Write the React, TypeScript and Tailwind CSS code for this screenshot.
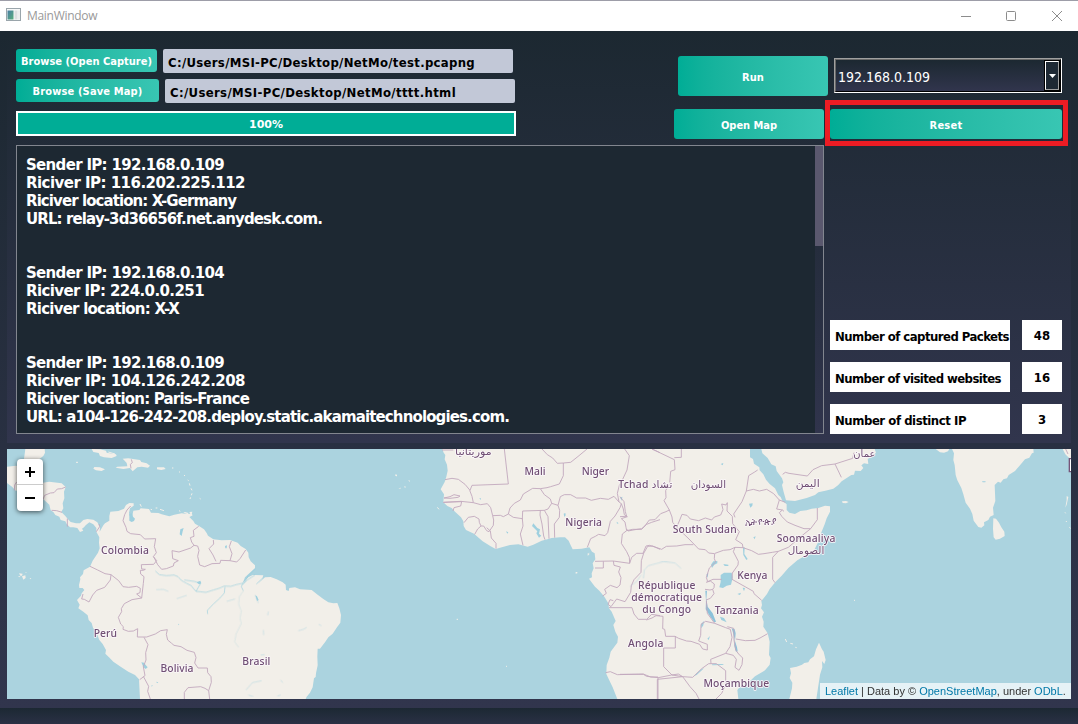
import React from 'react';

const BTN =
  'flex shrink-0 items-center justify-center whitespace-nowrap rounded-[3px] bg-gradient-to-r from-[#00ad96] to-[#38c6b3] text-[11px] font-bold text-white';
const FIELD =
  'flex h-6 w-[350px] items-center whitespace-pre rounded-[2px] bg-[#c2c8d7] pl-[5px] text-[13px] font-bold text-black';

const LOG: [string, number][] = [
  ['Sender IP: 192.168.0.109', 198],
  ['Riciver IP: 116.202.225.112', 219],
  ['Riciver location: X-Germany', 210],
  ['URL: relay-3d36656f.net.anydesk.com.', 296],
  ['', 0],
  ['', 0],
  ['Sender IP: 192.168.0.104', 198],
  ['Riciver IP: 224.0.0.251', 178],
  ['Riciver location: X-X', 153],
  ['', 0],
  ['', 0],
  ['Sender IP: 192.168.0.109', 198],
  ['Riciver IP: 104.126.242.208', 219],
  ['Riciver location: Paris-France', 223],
  ['URL: a104-126-242-208.deploy.static.akamaitechnologies.com.', 483],
];

const STATS = [
  { label: 'Number of captured Packets', value: 48, len: 174 },
  { label: 'Number of visited websites', value: 16, len: 166 },
  { label: 'Number of distinct IP', value: 3, len: 131 },
];

/* Country names: text, centre x, baseline y and drawn length in map units */
const NAMES: [string, number, number, number][] = [
  ['Colombia', 375, 341, 144],
  ['Perú', 316, 590, 70],
  ['Bolivia', 531, 696, 99],
  ['Brasil', 769, 675, 84],
  ['موريتانيا', 1420, 45, 110],
  ['Mali', 1605, 105, 63],
  ['Niger', 1786, 106, 82],
  ['Nigeria', 1751, 259, 110],
  ['Tchad تشاد', 1936, 144, 162],
  ['السودان', 2125, 144, 106],
  ['اليمن', 2423, 141, 72],
  ['عمان', 2593, 50, 66],
  ['South Sudan', 2114, 279, 192],
  ['ኢትዮጵያ', 2282, 255, 94],
  ['Soomaaliya', 2418, 306, 176],
  ['الصومال', 2418, 343, 110],
  ['Kenya', 2257, 416, 90],
  ['République', 2000, 447, 172],
  ['démocratique', 2000, 483, 212],
  ['du Congo', 2000, 519, 146],
  ['Tanzania', 2210, 522, 132],
  ['Angola', 1937, 620, 106],
  ['Moçambique', 2209, 741, 197],
];

function WorldMap() {
  return (
    <svg width="1064" height="250" viewBox="21 27 3192 750" className="block">
      <rect x="21" y="27" width="3192" height="750" fill="#abd3df" />
      <g fill="#f2efe9" strokeLinejoin="round">
        <path d="M76 27L72 57H118L130 48 135 38 134 27Z" />
        <path d="M21 80L48 77 60 80V152L47 152 36 140 21 129Z" />
        <path d="M275 27L300 28 318 32 320 38 348 43 350 48 335 54 312 52 300 48 296 39 280 36Z" />
        <path d="M368 56L385 55 399 57 420 60 424 66 440 70 450 77 444 83 425 80 412 82 398 94 390 84 370 87 347 83 352 80 382 79 380 69 374 62Z" />
        <path d="M283 81L300 82 315 88 305 93 288 91 280 86ZM471 82L492 82 497 87 484 90 471 88Z" />
        <path d="M129 128L148 125 160 127 185 130 197 141 192 155 193 175 188 190 190 205 184 216 196 228 204 238 212 246 228 250 240 250 250 240 262 237 280 239 292 247 300 262 299 275 310 256 315 250 328 242 328 228 331 215 355 213 372 206 378 195 388 189 401 190 401 197 390 205 387 218 389 228 395 234 398 222 400 212 418 210 422 205 447 207 453 218 475 219 485 223 508 229 523 224 545 220 560 222 575 221 578 226 568 231 580 243 585 251 598 259 612 268 620 279 624 287 640 298 665 301 690 300 713 308 722 318 737 327 745 338 746 352 752 364 765 376 765 385 748 400 735 412 728 430 745 412 758 405 790 406 786 418 772 432 795 412 812 411 830 418 848 427 857 434 858 450 866 453 868 444 885 442 900 448 935 450 950 462 970 477 985 487 1000 490 1012 489 1018 505 1023 525 1021 548 1011 562 998 581 985 592 976 605 960 626 953 626 952 650 953 676 948 700 947 711 942 715 938 742 930 758 920 770 917 777H420L417 718 405 705 385 695 362 680 340 665 327 652 316 641 318 630 308 612 298 600 290 580 279 563 275 549 266 540 263 526 250 515 235 505 239 494 231 480 243 467 245 460 253 450 248 444 238 444 237 435 241 418 240 412 249 402 251 391 270 380 278 362 286 350 294 338 299 325 297 308 298 292 289 275 289 264 280 253 268 247 257 256 252 262 246 266 250 272 240 276 232 264 220 262 210 262 200 252 196 244 182 240 178 230 166 225 160 216 152 211 148 194 140 187 129 177Z" />
        <path d="M1327 27L1331 38 1336 45 1334 58 1341 74 1343 92 1339 110 1334 126 1322 148 1332 163 1330 187 1342 198 1355 204 1365 215 1383 232 1390 244 1391 258 1398 270 1422 281 1448 304 1472 319 1487 327 1500 323 1530 315 1555 313 1583 320 1600 314 1625 302 1642 298 1655 294 1680 292 1695 292 1706 302 1712 316 1718 328 1745 326 1768 322 1776 335 1784 340 1786 358 1778 370 1781 385 1775 400 1776 412 1767 416 1777 430 1785 440 1798 452 1813 470 1825 490 1827 505 1835 515 1847 543 1840 555 1846 575 1854 590 1852 608 1843 620 1832 635 1828 653 1820 675 1819 702 1826 717 1838 742 1852 777H2215L2212 750 2220 740 2244 729 2265 709 2295 691 2309 674 2312 654 2307 645 2309 605 2303 580 2290 560 2291 545 2286 530 2292 517 2283 505 2286 495 2284 483 2301 462 2309 447 2327 425 2345 407 2365 384 2392 361 2415 347 2440 335 2455 305 2463 280 2474 253 2480 235 2490 215 2490 199 2475 197 2455 204 2435 206 2420 211 2401 213 2385 222 2368 218 2360 210 2360 193 2347 182 2342 171 2335 165 2325 145 2309 132 2298 119 2290 103 2279 91 2278 82 2262 71 2259 57 2250 52 2250 27Z" />
        <path d="M2284 27L2287 40 2303 54 2314 73 2327 79 2330 93 2346 115 2350 127 2346 135 2351 156 2358 181 2385 183 2420 174 2445 165 2455 157 2476 152 2500 146 2514 136 2525 124 2554 105 2562 104 2565 92 2582 93 2590 84 2584 76 2592 70 2605 72 2603 57 2615 50 2628 38 2624 27Z" />
        <path d="M2807 27L2820 37 2832 38 2844 34 2848 27ZM2856 27L2862 40 2860 60 2864 75 2867 105 2872 121 2884 144 2890 163 2897 188 2910 206 2917 222 2921 242 2935 261 2944 263 2953 256 2952 247 2965 240 2970 230 2981 225 2979 203 2986 183 2984 135 2994 125 3002 128 3010 118 3021 115 3026 105 3045 93 3058 78 3075 58 3088 53 3096 40 3101 38 3100 27Z" />
        <path d="M2980 235L2988 236 2997 248 3004 262 3013 275 3014 288 3000 296 2987 299 2981 292 2979 267ZM3188 27L3196 43 3202 49 3213 58V27ZM3200 168L3205 171 3200 194 3196 203 3200 180Z" />
        <path d="M2457 608L2466 628 2471 635 2477 660 2473 672 2466 663 2467 682 2460 704 2449 777H2368L2376 745 2377 728 2369 714 2373 700 2370 684 2390 680 2406 674 2413 669 2425 667 2430 658 2442 649 2448 628Z" />
        <path d="M2526 184L2538 183 2546 186 2538 190 2528 189ZM57 400L68 401 66 407 61 407ZM66 409L76 406 77 414 70 419ZM55 408L62 409 57 412ZM76 397L80 397 78 400ZM89 414L94 415 91 418ZM1186 103L1191 104 1191 109 1186 108ZM1225 120L1230 122 1228 126ZM1212 139L1218 140 1215 144ZM1195 145L1203 143 1201 146ZM1727 396L1732 396 1732 400 1727 401ZM550 218L555 216 566 219 563 223ZM568 216L577 215 574 227 567 230 571 222Z" />
        <path d="M1762 340L1769 338 1768 345 1762 348Z" stroke="#abd3df" strokeWidth="2" />
      </g>
      <g fill="none" stroke="#f2efe9" strokeWidth="3">
        <path d="M537 95L540 97M552 106L555 107M563 120L566 122M568 130L570 137M573 145L576 151M576 160L574 166M572 172L570 177M599 175L602 177M516 84L520 84M420 192L424 200M452 208L456 209M467 204L472 204M480 208L492 212M537 212L541 214M1312 202L1317 208M1370 538H1374M1518 679H1521M2356 597L2360 606M2371 610L2379 612M2386 622L2390 623M2562 481H2565M3195 217L3197 220M3198 243L3200 246M3208 262L3212 265M228 67L234 67M325 36L345 42" />
      </g>

      <g fill="none" stroke="#8ecbdd" strokeWidth="2" strokeLinejoin="round" opacity=".85">
        <path d="M765 386L754 398 744 408 735 424 726 430 708 434 692 439 673 438 657 445 640 450 618 457 600 455 588 454 580 445 574 437 560 430 544 421 534 410 522 405 500 407 478 404 466 393" />
        <path d="M588 454L602 430 582 424 553 420M675 440L673 459 659 475 640 492 622 511 623 522M728 430L724 440 730 452M769 432L786 416M728 434L742 420 765 405" strokeWidth="2" />
        <path d="M730 452L718 470 716 493 724 513 720 535 724 550 708 582 704 606 716 622" strokeWidth="1.5" opacity=".5" />
        <path d="M468 449L490 448 505 454M530 476L560 466M680 484L705 477M765 465L771 478 775 489M738 750L757 728 785 722M745 765L760 770M895 572L910 568 920 562M956 553L964 557M782 645L794 644M790 570L791 585M805 515L803 526M842 720L848 728M832 768L842 765M1930 415L1933 390 1945 377 1990 365 2025 369 2043 385M1890 440L1910 424 1923 405" strokeWidth="2" opacity=".6" />
      </g>
      <g fill="#9fd0df">
        <path d="M388 222L396 220 399 230 405 236 402 243 395 246 388 242ZM541 268L551 264 548 274 545 288 539 283ZM590 427L601 422 604 430 597 433ZM675 318L681 316 680 325 676 325ZM766 466L771 469 776 480 771 483ZM424 667L432 668 437 675 443 682 437 687 430 681ZM535 551L538 553 535 556ZM469 725L475 727 471 730ZM455 735L458 736 455 741Z" />
        <path d="M2162 405L2172 398 2195 398 2198 413 2193 434 2180 437 2169 444 2158 442 2162 426ZM2133 374L2140 364 2152 363 2152 370 2143 374 2136 384ZM2170 372L2185 374 2185 378 2174 378ZM2229 323L2234 322 2233 342 2243 357 2239 360 2230 345ZM2247 191L2258 190 2257 197 2251 203ZM2260 292L2267 289 2264 298ZM2160 530L2172 534 2180 547 2164 540ZM2212 462L2223 458 2220 465ZM2228 443L2235 444 2232 454ZM2103 552L2112 543 2110 556 2104 565ZM2122 596L2130 588 2126 600ZM2136 673L2172 672 2167 675 2137 676ZM2082 708L2105 687 2112 685 2090 705ZM1600 250L1612 264 1620 268 1617 281 1624 287 1617 293 1609 280 1612 274 1596 258ZM1691 221L1696 219 1697 226 1693 231ZM1518 274L1525 277 1522 281ZM1438 175L1443 175 1442 180ZM1494 293L1498 290M1860 173L1867 170 1866 182ZM1850 245L1856 250 1851 251ZM2162 72L2170 69 2168 76ZM2946 124L2957 124 2956 127 2948 127Z" />
        <path d="M2116 452L2121 452 2119 476 2123 500 2138 520 2148 545 2143 547 2130 529 2117 508 2118 482ZM2195 565L2204 568 2207 580 2205 603 2211 622 2213 634 2208 635 2203 617 2204 597 2199 578ZM2120 403L2125 400 2122 414Z" fill="#8cc2da" />
      </g>

      <g fill="none" stroke="#c2a8bd" strokeWidth="2.7" strokeLinejoin="round">
        <path d="M129 178L134 166 151 159 162 158 172 147 185 146 197 141M155 211L170 212 186 217M202 236V260M297 252L299 260 289 275M50 126L44 135 43 151M394 58L397 68 391 73 393 85" />
        <path d="M392 198L381 210 374 224 369 242 378 262 381 274 392 281 421 284 434 297 467 296 463 320 469 338 460 350 470 362 461 373 424 374 425 387 436 388 430 391 421 391 422 402 432 410 430 430 425 474 410 462 420 458 421 445 410 439 386 442 369 440 356 422 333 404 315 401 293 390 270 379" />
        <path d="M333 404L331 420 314 442 290 451 278 465 267 486 253 478 245 477 249 462M425 474L396 479 373 491 364 506 365 515 355 532 362 552 370 560 369 568 385 574 400 573 413 566 412 591 440 591 466 582 482 572 502 569 499 583 503 600 515 610 522 616 543 620 561 631 583 637 588 653 584 669 594 684 622 684 623 698 633 710 634 727 626 752 615 745 602 740 564 743 553 757V777M626 752L629 777M432 592L444 614 437 638 438 660 430 680 435 707 419 719M430 709L446 739 443 754 451 777" />
        <path d="M461 350L473 374 485 388 499 386 520 378 522 369 535 362 518 356 516 332 537 336 572 324 582 316 575 306 571 293 582 289 580 271 596 259M582 316L593 318 597 331 593 349 599 375 614 380 636 371 660 370 662 361 690 362 710 366 720 356 737 330M640 300L641 312 627 326 639 345 648 364M694 303L688 320 696 341 690 362" />
      </g>

      <g transform="translate(1290 0)" fill="none" stroke="#c2a8bd" strokeWidth="2.7" strokeLinejoin="round">
        <path d="M36 30H70M223 27L235 132 126 136 120 151 105 133 85 118 66 115 45 119M39 187L93 184 130 188 126 169 119 151M130 188L152 194 172 191 182 203 188 227 191 240 190 256 177 275 170 272 161 258 153 258 148 247 147 237 133 229 115 232 102 248M42 174L60 170 72 164 90 168 84 172 60 175 42 174M42 187L95 185 92 198 72 203 69 213M153 258L143 267 134 283M170 263L181 273 184 294 198 310 198 326" />
        <path d="M188 227L211 226 220 230 235 222 250 232 277 236 279 258 271 282 279 316M235 222L240 204 253 190 271 180 280 162 308 145 331 146 351 143 362 140 388 132 400 107V69L382 70 368 54 352 44 336 27M400 69L422 67 447 47 471 27M331 146L343 164 361 177 365 190 354 207 343 211 278 213 277 238M331 211L330 225 336 252 341 288 345 299M343 211L354 230 357 296M365 190L384 196 389 211 388 232 373 252 374 293M384 196L391 170 403 164 422 164 440 174 467 174 484 181 511 175 535 178 552 169 567 186 562 160 568 136 577 120 591 90 598 47 584 27M666 27L690 38" />
        <path d="M567 186L574 191 570 203 555 228 541 244 533 278 525 287 506 283 496 289 482 296 472 322M574 191L580 207 583 224 592 230 574 236 585 246 588 262 590 272 577 282 574 310 590 335 598 352 599 370 550 363 495 364M590 272L608 268 635 268 650 253 665 247 690 239M599 370L605 352 620 340 641 340 653 319 668 318 690 328M641 340L634 362 633 397 612 419 604 437 602 457 585 485 560 477 543 500 534 493 540 479 550 482M520 364V384H495M550 363L552 376 571 381 566 396 573 413 570 435 561 443 541 436 524 448 529 460 518 468M537 503L606 503 612 522 625 538 650 538 665 523 690 527M527 698L541 695 562 704 640 702 662 711 684 711V777" />
      </g>

      <g transform="translate(1860 0)" fill="none" stroke="#c2a8bd" strokeWidth="2.7" strokeLinejoin="round">
        <path d="M96 27L163 59 165 89 152 94 149 130 137 152 138 173 132 182 148 210 138 215 122 221 105 239 88 240 75 257 65 266 45 269 24 273 20 267M163 53L184 52V27M0 170L12 185 16 215 20 229 0 230M148 210L156 231 158 247 170 261 178 243 186 223 201 226 211 237 236 242 256 234 275 240 283 231 302 225 309 209 305 192 318 195 322 188 321 213 337 229 338 251 358 275 347 299 367 312 369 323 345 322 330 329 310 331 285 340" />
        <path d="M170 261L186 277 207 297 236 327 256 329 266 339 284 341 283 356 287 366 268 384 259 412 263 425 279 418H305M69 340L78 318 88 316 105 321 125 328 139 319 170 318 195 314 220 314M345 322L340 335 355 364 354 375 337 399 336 418 400 454 402 461 425 481M369 323L395 332 415 343 432 341 457 337 475 334 458 352V418L465 428M475 334L505 322 552 282 572 266 552 266 525 256 502 246 486 230 478 218 487 210 470 207 478 180 461 161 440 148 418 153 400 148 379 153 366 185 341 222 345 232M379 153L386 107 404 96 413 90M478 180L496 187M572 266L592 239V204M487 210L492 214" />
        <path d="M258 427L271 423 283 432 282 443 278 448 282 461 271 475 258 480M255 448L270 450 278 448M259 482L262 520 284 550 257 544 243 553 242 586 236 603 262 613V630L248 627 239 613 213 604 200 603 176 595 165 589H137L134 568 128 566 129 529 108 527 96 534 79 540M166 589V624H131V680L156 705 188 710 218 712 245 686 266 671 289 671 317 692V735L305 760 288 777M0 703H70L80 709 115 713 155 705 175 702 188 710 210 740 228 760 237 777M188 710L112 718V777M284 550L317 563 331 568 336 592 330 620 317 640 272 658 273 671M322 560L341 565 342 600 347 630 356 642 368 654 366 674 357 691 345 682 349 658 340 646 317 640M348 597L376 602 405 601 420 594 443 581" />
        <path d="M488 103L496 97 507 100 562 108 579 89 605 77 645 72 698 55 702 38M645 72L664 112" />
        <path d="M1337 27L1344 42" />
      </g>

      <g
        fill="#704f74"
        stroke="#fbf7fa"
        strokeWidth="5"
        strokeLinejoin="round"
        paintOrder="stroke"
        fontFamily="'Noto Sans','DejaVu Sans',sans-serif"
        fontSize="31"
        fontWeight="500"
        textAnchor="middle"
      >
        {NAMES.map(([t, x, y, len]) => (
          <text key={t} x={x} y={y} textLength={len} lengthAdjust={/^[A-Z d]/.test(t) ? 'spacing' : 'spacingAndGlyphs'}>
            {t}
          </text>
        ))}
      </g>
      <path d="M3213 56H3208V95H3213" fill="#fff" stroke="#765579" strokeWidth="4" />
    </svg>
  );
}

function Title() {
  return (
    <header className="flex h-[31px] shrink-0 items-center border-t border-[#9d9da8] bg-white text-[#999]">
      <svg width="16" height="14" viewBox="0 0 16 14" className="-mt-[2px] ml-[6px] shrink-0">
        <rect x=".5" y=".5" width="14" height="12" fill="#f7f8f8" stroke="#9aa5ab" />
        <rect x="1.5" y="2.5" width="6" height="9" fill="url(#app)" />
        <rect x="8.5" y="2.5" width="3" height="9" fill="#dcdfe0" />
        <rect x="12" y="2.5" width="2" height="9" fill="#eceeee" />
        <defs>
          <linearGradient id="app" x1="0" y1="0" x2="1" y2="1">
            <stop stopColor="#4a7fa5" />
            <stop offset="1" stopColor="#58ad7b" />
          </linearGradient>
        </defs>
      </svg>
      <span className="ml-[5px] font-['Open_Sans',sans-serif] text-[12px] leading-none tracking-[-0.3px]">MainWindow</span>
      <svg width="110" height="12" viewBox="0 0 110 12" className="ml-auto mr-[13px] -mt-px shrink-0" fill="none" stroke="#8c8c8c">
        <path d="M6 6.5H16" />
        <rect x="51.5" y="1.5" width="9" height="9" rx="1" />
        <path d="M97 1L107 11M107 1L97 11" />
      </svg>
    </header>
  );
}

/* One line of text spread to a fixed advance width through letter spacing */
function Fit({ text, len, size, regular, wide }: { text: string; len: number; size: number; regular?: boolean; wide?: boolean }) {
  const [gap, setGap] = React.useState(0);
  React.useLayoutEffect(() => {
    const ctx = document.createElement('canvas').getContext('2d');
    if (!ctx) return;
    const family = wide ? '"DejaVu Sans"' : '"DejaVu Sans Condensed"';
    ctx.font = `${regular ? 400 : 700} ${size}px ${family}, sans-serif`;
    setGap((len - ctx.measureText(text).width) / text.length);
  }, [text, len, size, regular, wide]);
  return (
    <span
      className={`whitespace-pre pt-[2px] leading-none ${wide ? "font-['DejaVu_Sans',sans-serif]" : ''}`}
      style={{ letterSpacing: `${gap}px` }}
    >
      {text}
    </span>
  );
}

export default function App() {
  return (
    <div className="relative flex h-[724px] w-[1078px] flex-col overflow-hidden bg-[#1c2833] font-['DejaVu_Sans_Condensed','DejaVu_Sans',sans-serif]">
      <Title />
      <div className="flex h-[677px] shrink-0 flex-col bg-gradient-to-b from-[#1c2831] to-[#31354d] px-[7px]">
        <main className="h-[412px] shrink-0 bg-gradient-to-b from-[#1c2831] to-[#31354d] px-[9px]">
          <div className="flex h-[114px] justify-between">
            <div className="flex w-[500px] flex-col pt-[18px]">
              <div className="flex h-[30px] gap-[6px]">
                <button className={`${BTN} h-[23px] w-[141px]`}>
                  <Fit text="Browse (Open Capture)" len={131} size={11} />
                </button>
                <div className={FIELD}>
                  <Fit text="C:/Users/MSI-PC/Desktop/NetMo/test.pcapng" len={307} size={13} />
                </div>
              </div>
              <div className="flex h-8 gap-[6px]">
                <button className={`${BTN} h-[23px] w-[143px]`}>
                  <Fit text="Browse (Save Map)" len={110} size={11} />
                </button>
                <div className={FIELD}>
                  <Fit text="C:/Users/MSI-PC/Desktop/NetMo/tttt.html" len={286} size={13} />
                </div>
              </div>
              <div className="flex h-[25px] items-center justify-center border-2 border-white bg-[#00ad96] text-[11px] font-bold text-white">
                <Fit text="100%" len={34} size={11} wide />
              </div>
            </div>
            <div className="flex w-[388px] flex-col pt-[25px]">
              <div className="flex h-[53px] gap-[6px] pl-1">
                <button className={`${BTN} h-10 w-[150px]`}>
                  <Fit text="Run" len={22} size={11} />
                </button>
                <div className="mt-[2px] flex h-[35px] w-[228px] border border-b-white border-l-[#a0a0a0] border-r-white border-t-[#a0a0a0]">
                  <div className="flex w-full items-center border border-b-black border-l-[#696969] border-r-black border-t-[#696969] bg-gradient-to-b from-[#1c2831] to-[#31354d] pl-[2px] text-[14px] text-white">
                    <Fit text="192.168.0.109" len={92} size={14} regular />
                    <div className="ml-auto flex h-[31px] w-4 items-center justify-center border border-black bg-[#1e2934]">
                      <div className="flex h-[29px] w-[14px] items-center justify-center border border-b-[#a0a0a0] border-l-white border-r-[#a0a0a0] border-t-white">
                        <svg width="7" height="4" viewBox="0 0 7 4">
                          <path d="M0 0H7L3.5 4Z" fill="white" />
                        </svg>
                      </div>
                    </div>
                  </div>
                </div>
              </div>
              <div className="flex gap-[6px]">
                <button className={`${BTN} h-[30px] w-[150px]`}>
                  <Fit text="Open Map" len={56} size={11} />
                </button>
                <button className={`${BTN} h-[30px] w-[232px]`}>
                  <Fit text="Reset" len={33} size={11} />
                </button>
              </div>
            </div>
          </div>
          <div className="flex h-[289px] gap-[6px]">
            <div className="flex w-[808px] border border-[#82868f] bg-[#1d2832]">
              <div className="flex flex-1 flex-col pl-[9px] pt-[9px] text-[15px] font-bold text-white">
                {LOG.map(([line, len], i) => (
                  <div key={i} className="flex h-[18px] items-center">
                    {line && <Fit text={line} len={len} size={15} wide />}
                  </div>
                ))}
              </div>
              <div className="w-[8px] bg-gradient-to-b from-[#1f2935] to-[#30344c]">
                <div className="h-[100px] bg-[#5a586e]" />
              </div>
            </div>
            <div className="flex w-[232px] flex-col justify-end gap-3 text-[13px] font-bold text-black">
              {STATS.map((s) => (
                <div key={s.label} className="flex gap-3">
                  <div className="flex h-[30px] w-[180px] items-center bg-white pl-[5px]">
                    <Fit text={s.label} len={s.len} size={13} />
                  </div>
                  <div className="flex h-[30px] w-10 items-center justify-center bg-white pt-[2px]">{s.value}</div>
                </div>
              ))}
            </div>
          </div>
        </main>
        <section className="relative mt-[6px] h-[250px] shrink-0 overflow-hidden">
          <WorldMap />
          <div className="absolute left-[10px] top-[10px] w-[26px] overflow-hidden rounded-[4px] bg-white shadow-[0_1px_5px_rgba(0,0,0,0.65)]">
            <button className="flex h-[26px] w-full items-center justify-center border-b border-[#ccc]">
              <svg width="10" height="10" viewBox="0 0 10 10">
                <path d="M5 0V10M0 5H10" stroke="black" strokeWidth="2" />
              </svg>
            </button>
            <button className="flex h-[26px] w-full items-center justify-center">
              <svg width="10" height="10" viewBox="0 0 10 10">
                <path d="M0 5H10" stroke="black" strokeWidth="2" />
              </svg>
            </button>
          </div>
          <div className="absolute bottom-0 right-0 flex h-4 w-[251px] items-center whitespace-pre bg-white/70 pl-[5px] font-['Liberation_Sans',sans-serif] text-[11px] text-[#333]">
            <span className="text-[#0078a8]">Leaflet</span> | Data by © <span className="text-[#0078a8]">OpenStreetMap</span>, under{' '}
            <span className="text-[#0078a8]">ODbL</span>.
          </div>
        </section>
      </div>
      <footer className="h-4 shrink-0 bg-gradient-to-b from-[#1c2833] to-[#2a3045]" />
      <div className="pointer-events-none absolute left-[825px] top-[100px] h-[46px] w-[243px] border-[5px] border-[#ed1c24]" />
    </div>
  );
}
